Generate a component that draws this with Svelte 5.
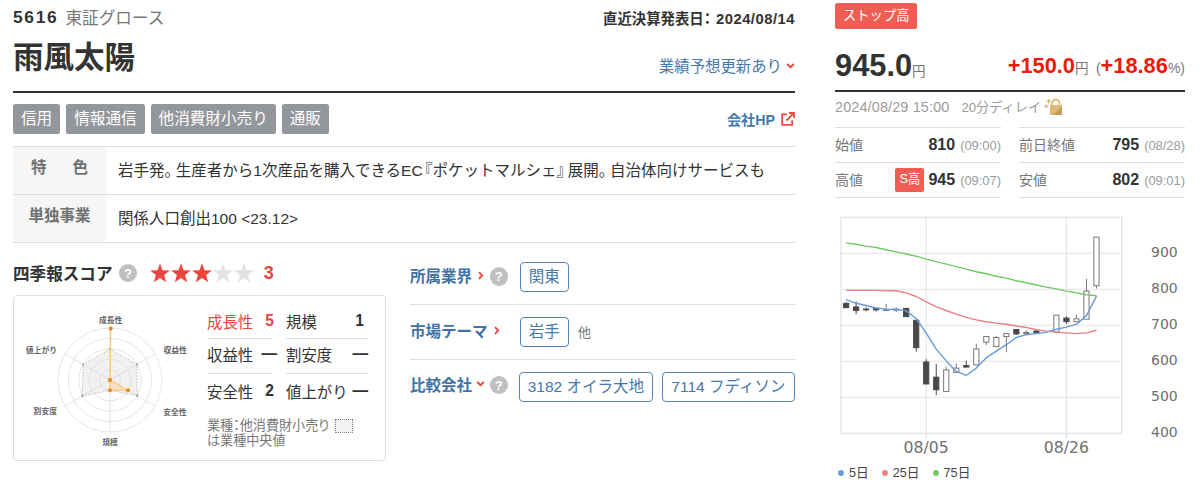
<script lang="ts">
  interface Candle {
    open: number
    high: number
    low: number
    close: number
  }

  const tags = ['信用', '情報通信', '他消費財小売り', '通販']

  const scores = [
    [
      { label: '成長性', value: '5', strong: true },
      { label: '収益性', value: '―' },
      { label: '安全性', value: '2' }
    ],
    [
      { label: '規模', value: '1' },
      { label: '割安度', value: '―' },
      { label: '値上がり', value: '―' }
    ]
  ]

  // open, high, low, close
  const candles: Candle[] = [
    [761, 765, 749, 749],
    [751, 766, 731, 741],
    [745, 750, 739, 743],
    [747, 747, 738, 743],
    [741, 759, 741, 743],
    [742, 750, 737, 745],
    [747, 747, 724, 724],
    [714, 714, 627, 638],
    [598, 606, 537, 537],
    [556, 593, 506, 521],
    [516, 585, 516, 576],
    [569, 594, 569, 581],
    [588, 602, 583, 584],
    [590, 649, 589, 634],
    [653, 669, 645, 669],
    [641, 670, 641, 666],
    [669, 677, 625, 677],
    [688, 688, 673, 676],
    [677, 686, 677, 680],
    [684, 687, 679, 679],
    [681, 681, 681, 681],
    [681, 728, 681, 728],
    [720, 725, 704, 710],
    [710, 729, 710, 718],
    [717, 829, 717, 795],
    [810, 945, 802, 945]
  ].map(([open, high, low, close]) => ({ open, high, low, close }))

  const averages = [
    {
      name: '5日',
      color: '#659bdd',
      values: [771, 761, 755, 748, 745, 744, 740, 719, 678, 634, 601, 572, 561, 581, 610, 628, 646, 666, 674, 677, 681, 689, 695, 703, 727, 781]
    },
    {
      name: '25日',
      color: '#ec7f82',
      values: [797, 797, 797, 797, 796, 796, 790, 780, 765, 751, 741, 731, 722, 715, 710, 706, 703, 698, 694, 688, 684, 681, 679, 677, 679, 686]
    },
    {
      name: '75日',
      color: '#72c865',
      values: [929, 925, 920, 916, 910, 904, 898, 892, 884, 877, 870, 863, 856, 849, 843, 836, 831, 824, 818, 812, 806, 801, 795, 790, 785, 782]
    }
  ]

  const ticks = [900, 800, 700, 600, 500, 400]
  const dates = [
    { index: 8, label: '08/05' },
    { index: 22, label: '08/26' }
  ]

  const px = (i: number) => 11.1 + i * 10.015
  const py = (v: number) => 223.3 - (v - 400) * 0.36
  const line = (values: number[]) => values.map((v, i) => `${px(i)},${py(v).toFixed(1)}`).join(' ')

  // radar axes, clockwise from the top
  const radius = 52
  const spoke = (i: number, r: number) => {
    const a = (Math.PI / 3) * i
    return [Math.sin(a) * r, -Math.cos(a) * r]
  }
  const median = [31, 31, 31.5, 10.4, 32, 31].map((r, i) => spoke(i, r))
  const spokes = [0, 1, 2, 3, 4, 5].map((i) => spoke(i, radius))
  const company = [
    [0.7, -51.5],
    [0, 0],
    [18, 10.3],
    [0, 10.3],
    [0, 0]
  ]
  const points = (list: number[][]) => list.map((p) => p.join(',')).join(' ')

  const starPath = 'M10 0.2L12.5 7.2L19.9 7.4L14.1 12L16.2 19.2L10 15L3.8 19.2L5.9 12L0.1 7.4L7.5 7.2Z'
</script>

{#snippet help()}
  <span class="help">?</span>
{/snippet}

{#snippet chevron(down: boolean)}
  <svg class="chevron" class:down width="9" height="9" viewBox="0 0 9 9" fill="none">
    <path d="M3 1.2L6.2 4.5L3 7.8" stroke="#ed4942" stroke-width="1.9" />
  </svg>
{/snippet}

<div class="page">
  <main class="company">
    <header class="head">
      <div class="identity">
        <div class="code"><b>5616</b><span>東証グロース</span></div>
        <h1>雨風太陽</h1>
      </div>
      <div class="updates">
        <div class="announce">直近決算発表日：<span>2024/08/14</span></div>
        <a class="forecast" href="#forecast">業績予想更新あり{@render chevron(true)}</a>
      </div>
    </header>

    <div class="tags">
      {#each tags as tag}
        <span class="tag">{tag}</span>
      {/each}
      <a class="website" href="#website">
        会社HP
        <svg width="14" height="14" viewBox="0 0 14 14" fill="none" stroke="#ed4942" stroke-width="1.8">
          <path d="M6 2.3H1.2V12.8H11.2V8.3M5.5 8.5L12.3 1.6M8 1H13V6" />
        </svg>
      </a>
    </div>

    <dl class="profile">
      <dt class="wide">特<span>色</span></dt>
      <dd>岩手発<span class="close">。</span>生産者から1次産品を購入できるEC<span class="open">『</span>ポケットマルシェ<span class="close">』</span>展開<span class="close">。</span>自治体向けサービスも</dd>
      <dt>単独事業</dt>
      <dd>関係人口創出100 &lt;23.12&gt;</dd>
    </dl>

    <div class="lower">
      <section class="score">
        <div class="score-title">
          <h2>四季報スコア</h2>
          {@render help()}
          <div class="stars">
            {#each [1, 2, 3, 4, 5] as n}
              <svg width="21" height="20" viewBox="0 0 21 20"><path d={starPath} fill={n <= 3 ? '#ec453e' : '#e2e2e2'} /></svg>
            {/each}
          </div>
          <b>3</b>
        </div>

        <div class="score-card">
          <svg class="radar" width="186" height="162" viewBox="-96 -84 186 162">
            {#each [1, 2, 3, 4, 5] as ring}
              <circle r={(radius / 5) * ring} fill="none" stroke="#e2e2e2" stroke-width="0.9" />
            {/each}
            {#each spokes as [x, y]}
              <line x2={x} y2={y} stroke="#e2e2e2" />
            {/each}
            <polygon points={points(median)} fill="#ddd" fill-opacity="0.4" stroke="#999" stroke-width="0.9" stroke-dasharray="1 2" />
            {#each median as [x, y]}
              <circle cx={x} cy={y} r="0.9" fill="#888" />
            {/each}
            <polygon points={points(company)} fill="#ffb74d" fill-opacity="0.25" stroke="#ffc773" stroke-width="1.3" />
            {#each company as [x, y]}
              <circle cx={x} cy={y} r="2" fill="#ea8b1d" />
            {/each}
            <g class="axis-names">
              <text x="0.7" y="-57.3" text-anchor="middle">成長性</text>
              <text x="53.5" y="-26.8">収益性</text>
              <text x="53.2" y="35.2">安全性</text>
              <text x="0" y="64.8" text-anchor="middle">規模</text>
              <text x="-53" y="34.4" text-anchor="end">割安度</text>
              <text x="-53" y="-27.2" text-anchor="end">値上がり</text>
            </g>
          </svg>

          <div class="score-detail">
            <div class="score-columns">
              {#each scores as column}
                <ul>
                  {#each column as item}
                    <li class:strong={item.strong}>
                      <span>{item.label}</span>
                      <b class:none={item.value === '―'}>{item.value}</b>
                    </li>
                  {/each}
                </ul>
              {/each}
            </div>
            <p class="note">業種：他消費財小売り<i></i><br />は業種中央値</p>
          </div>
        </div>
      </section>

      <section class="related">
        <div class="related-row">
          <h3>所属業界{@render chevron(false)}</h3>
          {@render help()}
          <div class="chips"><a href="#kanto">関東</a></div>
        </div>
        <div class="related-row">
          <h3>市場テーマ{@render chevron(false)}</h3>
          <div class="chips"><a href="#iwate">岩手</a><small>他</small></div>
        </div>
        <div class="related-row peers">
          <h3>比較会社{@render chevron(true)}</h3>
          {@render help()}
          <div class="chips"><a href="#3182">3182 オイラ大地</a><a href="#7114">7114 フディソン</a></div>
        </div>
      </section>
    </div>
  </main>

  <aside class="quote">
    <div class="limit">ストップ高</div>

    <div class="price">
      <div><strong>945.0</strong><span class="yen">円</span></div>
      <div class="change">
        <b>+150.0</b><span class="yen">円</span>
        <span class="percent">(<b>+18.86</b>%)</span>
      </div>
    </div>

    <div class="time">
      <time>2024/08/29 15:00</time>
      <span>20分ディレイ</span>
      <svg width="20" height="18" viewBox="0 0 20 18">
        <path d="M8.2 8V5.2a3.6 3.6 0 0 1 7.2 0V8" fill="none" stroke="#d9b56f" stroke-width="1.7" />
        <rect x="6" y="7" width="12" height="10" rx="0.8" fill="#dcb974" />
        <path d="M18 9V16.2a.8.8 0 0 1-.8.8H8.5Z" fill="#c09c57" />
        <path d="M4.7 1V5.4M2.5 3.2H6.9M2.2 6.6V10M0.5 8.3H3.9" stroke="#d9b56f" stroke-width="1.3" />
      </svg>
    </div>

    <div class="prices">
      <div><span>始値</span><b>810</b><small>(09:00)</small></div>
      <div><span>前日終値</span><b>795</b><small>(08/28)</small></div>
      <div><span>高値</span><em>S高</em><b>945</b><small>(09:07)</small></div>
      <div><span>安値</span><b>802</b><small>(09:01)</small></div>
    </div>

    <svg class="chart" width="365" height="250" viewBox="0 0 365 250">
      <g stroke="#e4e4e6" stroke-width="1">
        <rect x="6" y="7.3" width="280.8" height="216" fill="none" stroke-width="1.4" />
        {#each ticks.slice(0, 5) as t}
          <line x1="6" x2="286.8" y1={py(t)} y2={py(t)} />
        {/each}
        {#each dates as d}
          <line x1={px(d.index)} x2={px(d.index)} y1="7.3" y2="223.3" />
          <line x1={px(d.index)} x2={px(d.index)} y1="223.3" y2="228.5" stroke="#ccd6eb" />
        {/each}
      </g>

      {#each candles as c, i}
        {@const top = Math.max(c.open, c.close)}
        {@const bottom = Math.min(c.open, c.close)}
        <g stroke={c.close < c.open ? '#484848' : '#777'} stroke-width="1">
          <line x1={px(i)} x2={px(i)} y1={py(c.high)} y2={py(top)} />
          <line x1={px(i)} x2={px(i)} y1={py(bottom)} y2={py(c.low)} />
          <rect
            x={px(i) - 2.6}
            y={py(top)}
            width="5.2"
            height={(top - bottom) * 0.36}
            fill={c.close < c.open ? '#484848' : '#fff'}
          />
        </g>
      {/each}

      {#each [...averages].reverse() as average}
        <polyline points={line(average.values)} fill="none" stroke={average.color} stroke-width="1.4" stroke-linejoin="round" />
      {/each}

      <g class="ticks">
        {#each ticks as t}
          <text x="316" y={py(t) + 3.6}>{t}</text>
        {/each}
      </g>
      <g class="dates">
        {#each dates as d}
          <text x={px(d.index)} y="243.3" text-anchor="middle">{d.label}</text>
        {/each}
      </g>
    </svg>

    <div class="legend">
      {#each averages as average}
        <span>
          <svg width="6" height="6" viewBox="0 0 6 6"><circle cx="3" cy="3" r="2.9" fill={average.color} /></svg>
          {average.name}
        </span>
      {/each}
    </div>
  </aside>
</div>

<style>
  :global(body) {
    background: #fff;
  }

  .page {
    display: flex;
    gap: 40px;
    box-sizing: border-box;
    width: 1200px;
    height: 483px;
    padding-left: 13px;
    overflow: hidden;
    color: #333;
    font-family: "Liberation Sans", "Noto Sans CJK JP", sans-serif;
  }

  h1,
  h2,
  h3,
  ul,
  dd {
    margin: 0;
    padding: 0;
  }

  a {
    color: #4578ab;
    text-decoration: none;
    white-space: nowrap;
  }

  svg {
    flex: none;
  }

  .chevron.down {
    transform: rotate(90deg);
  }

  .help {
    flex: none;
    width: 18.6px;
    height: 18.6px;
    border-radius: 50%;
    background: #c0c0c0;
    color: #fff;
    font-size: 13px;
    font-weight: 700;
    line-height: 19px;
    text-align: center;
  }

  /* left column */
  .company {
    width: 782px;
  }

  .head {
    display: flex;
    justify-content: space-between;
    box-sizing: border-box;
    height: 92.6px;
    border-bottom: 2px solid #333;
  }

  .code {
    display: flex;
    align-items: center;
    gap: 7px;
    height: 34px;
    color: #777;
    font-size: 16.6px;
  }

  .code b {
    color: #333;
    font-size: 17.4px;
    letter-spacing: 1.7px;
  }

  h1 {
    font-size: 30.5px;
    line-height: 46px;
  }

  .updates {
    text-align: right;
  }

  .announce {
    height: 38px;
    font-size: 14.4px;
    font-weight: 700;
    line-height: 38px;
    font-feature-settings: "palt";
  }

  .announce span {
    margin-left: 5px;
    font-size: 14.8px;
    letter-spacing: 0.5px;
  }

  .forecast {
    display: flex;
    align-items: center;
    justify-content: flex-end;
    gap: 4px;
    height: 54px;
    font-size: 15.4px;
  }

  .tags {
    display: flex;
    align-items: center;
    gap: 6px;
    height: 30px;
    margin-top: 11.8px;
  }

  .tag {
    padding: 0 8px;
    border-radius: 2.5px;
    background: #93969b;
    color: #fff;
    font-size: 15.6px;
    line-height: 30px;
  }

  .website {
    display: flex;
    align-items: center;
    gap: 6px;
    margin-left: auto;
    font-size: 14.2px;
    font-weight: 700;
  }

  .profile {
    display: grid;
    grid-template-columns: 93px 1fr;
    margin: 11.6px 0 0;
    border-top: 1px solid #ddd;
  }

  .profile dt,
  .profile dd {
    box-sizing: border-box;
    height: 48px;
    border-bottom: 1px solid #ddd;
    font-size: 15.5px;
    white-space: nowrap;
  }

  .profile dt {
    background: #f6f6f6;
    color: #707070;
    font-weight: 700;
    line-height: 41px;
    text-align: center;
  }

  .profile .wide span {
    margin-left: 26px;
  }

  .profile dd {
    padding-left: 12px;
    line-height: 47px;
  }

  .profile .close,
  .profile .open {
    font-feature-settings: "halt";
  }

  .profile .close {
    margin-right: 3.5px;
  }

  .profile .open {
    margin-left: 2px;
  }

  .lower {
    display: flex;
    gap: 24px;
  }

  .score {
    width: 373px;
  }

  .score-title {
    display: flex;
    align-items: center;
    height: 52px;
    margin-top: 4px;
    font-size: 18px;
  }

  .score-title b {
    margin-left: 9px;
    padding-top: 2px;
    color: #ec453e;
  }

  h2 {
    margin-right: 6px;
    font-size: 16.6px;
    white-space: nowrap;
  }

  .stars {
    display: flex;
    margin-left: 12.6px;
  }

  .score-card {
    display: flex;
    box-sizing: border-box;
    height: 166px;
    margin-top: -4.4px;
    border: 1.5px solid #ddd;
    border-radius: 4px;
  }

  .axis-names {
    fill: #666;
    font-size: 7.8px;
    font-weight: 700;
  }

  .score-detail {
    margin-left: 7px;
  }

  .score-columns {
    display: flex;
    gap: 14px;
    padding-top: 8px;
  }

  .score-columns ul {
    width: 65px;
    list-style: none;
  }

  .score-columns ul + ul {
    width: 82px;
  }

  .score-columns li {
    display: flex;
    align-items: center;
    justify-content: space-between;
    box-sizing: border-box;
    height: 35px;
    border-bottom: 1.5px solid #ddd;
    font-size: 15.4px;
    white-space: nowrap;
  }

  .score-columns li:nth-child(2) {
    padding-bottom: 4px;
  }

  .score-columns li:last-child {
    border-bottom: 0;
  }

  .score-columns .strong,
  .strong b {
    color: #ec453e;
  }

  .score-columns b {
    margin-right: -2px;
    font-size: 15.6px;
  }

  .score-columns b.none {
    margin-right: -5px;
  }

  .score-columns ul + ul b {
    margin-right: 4px;
  }

  .score-columns ul + ul b.none {
    margin-right: 0;
  }

  .note {
    margin: 9px 0 0;
    color: #777;
    font-size: 13.1px;
    line-height: 15px;
    font-feature-settings: "palt";
  }

  .note i {
    display: inline-block;
    width: 16px;
    height: 12px;
    margin-left: 6px;
    border: 1px dotted #888;
    background: #f3f3f3;
    vertical-align: -3px;
  }

  .related {
    width: 385px;
    padding-top: 6.6px;
  }

  .related-row {
    display: flex;
    align-items: center;
    box-sizing: border-box;
    height: 55px;
    border-bottom: 1px solid #ddd;
  }

  .related-row:last-child {
    border-bottom: 0;
  }

  h3 {
    display: flex;
    align-items: center;
    gap: 4px;
    padding-bottom: 3px;
    color: #3f72a6;
    font-size: 15.5px;
    white-space: nowrap;
  }

  .related-row .help {
    margin-left: 4.5px;
  }

  .related-row.peers :is(h3, .help) {
    margin-bottom: 4px;
  }

  .chips {
    display: flex;
    align-items: center;
    gap: 9px;
    margin-left: auto;
    width: 275.5px;
  }

  .peers .chips {
    width: 276.5px;
  }

  .chips a {
    border: 1.5px solid #5585b5;
    border-radius: 4px;
    padding: 0 8.2px;
    font-size: 15.5px;
    line-height: 28px;
  }

  .chips small {
    color: #777;
    font-size: 13px;
  }

  /* right column */
  .quote {
    width: 350px;
    padding-top: 3px;
    color: #777;
  }

  .limit {
    width: fit-content;
    padding: 0 8px;
    border-radius: 2.5px;
    background: #f05e53;
    color: #fff;
    font-size: 13.3px;
    line-height: 25.5px;
  }

  .price {
    display: flex;
    align-items: center;
    justify-content: space-between;
    box-sizing: border-box;
    height: 63px;
    padding-top: 14px;
    border-bottom: 2px solid #333;
    white-space: nowrap;
  }

  .price strong {
    color: #333;
    font-size: 30.8px;
  }

  .price b {
    color: #f01807;
    font-size: 21.8px;
  }

  .price .yen {
    font-size: 13.5px;
  }

  .change {
    padding-bottom: 1px;
  }

  .percent {
    margin-left: 3px;
    font-size: 14px;
  }

  .time {
    display: flex;
    align-items: center;
    box-sizing: border-box;
    height: 35.5px;
    padding-bottom: 4px;
    color: #999b9e;
    font-size: 14.4px;
  }

  .time time {
    margin-right: 12px;
    letter-spacing: 0.15px;
  }

  .time span {
    margin-right: 3px;
    padding-bottom: 2px;
    font-size: 13.2px;
  }

  .prices {
    display: grid;
    grid-template-columns: 166px 166px;
    column-gap: 18px;
  }

  .prices div {
    display: flex;
    align-items: center;
    box-sizing: border-box;
    height: 35px;
    border-top: 1px solid #ddd;
  }

  .prices div:nth-last-child(-n + 2) {
    height: 36px;
    border-bottom: 1px solid #ddd;
  }

  .prices span {
    margin-right: auto;
    padding-bottom: 2px;
    font-size: 14px;
  }

  .prices b {
    color: #333;
    font-size: 16px;
  }

  .prices small {
    margin-left: 5px;
    color: #999b9e;
    font-size: 12.9px;
  }

  .prices em {
    margin-right: 4px;
    padding: 0 4px;
    border-radius: 2px;
    background: #f05e53;
    color: #fff;
    font-size: 12.6px;
    font-style: normal;
    line-height: 23.5px;
  }

  .chart {
    display: block;
    margin-top: 12px;
  }

  .ticks,
  .dates {
    fill: #707070;
    font-family: "DejaVu Sans", sans-serif;
    font-size: 14px;
  }

  .dates {
    font-size: 15.7px;
  }

  .legend {
    display: flex;
    gap: 13px;
    padding-left: 3px;
    color: #444;
    font-size: 12.7px;
    line-height: 26px;
  }

  .legend span {
    display: flex;
    align-items: center;
    gap: 5px;
  }
</style>
